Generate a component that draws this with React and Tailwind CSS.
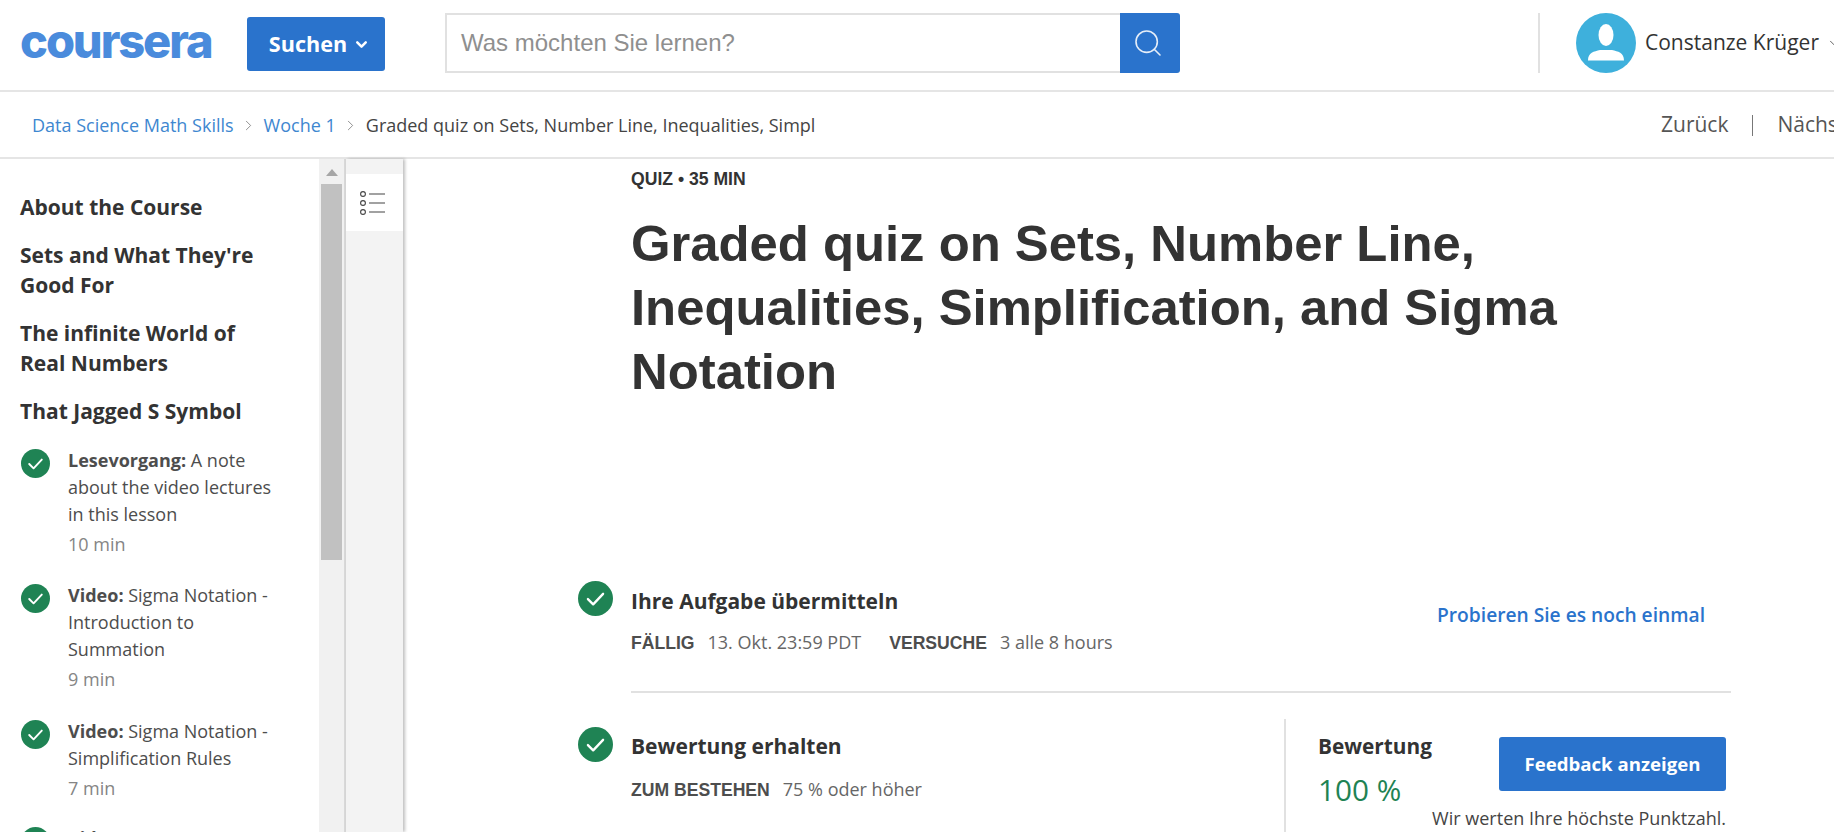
import React from 'react'
import { ChevronDown, ChevronRight, Search } from 'lucide-react'

function CheckBadge({ size }) {
  return (
    <svg width={size} height={size} viewBox="0 0 30 30" className="shrink-0">
      <circle cx="15" cy="15" r="15" fill="#1f8354" />
      <path d="M8.5 15.500l4.500 4.500 8.500-9" fill="none" stroke="#fff" strokeWidth="2" strokeLinecap="round" strokeLinejoin="round" />
    </svg>
  )
}

function Lesson({ kind, title, time, className }) {
  return (
    <div className={'flex gap-[19px] ' + className}>
      <div className="pt-[1px] pl-[1px]"><CheckBadge size={29} /></div>
      <div className="-ml-[1px] w-[210px] text-[18px] leading-[27px] text-[#4d4d4d]">
        <p className="-mt-[1px]"><span className="font-bold">{kind}:</span> {title}</p>
        {time && <p className="mt-[3px] text-[#858585]">{time}</p>}
      </div>
    </div>
  )
}

function Sidebar() {
  const headings = [
    ["About the Course"],
    ["Sets and What They're", 'Good For'],
    ['The infinite World of', 'Real Numbers'],
    ['That Jagged S Symbol'],
  ]
  return (
    <aside className="w-[319px] shrink-0 overflow-hidden pl-[20px] pt-[33px]">
      {headings.map((lines, i) => (
        <h3 key={i} className="mb-[18px] whitespace-nowrap text-[21px] font-bold leading-[30px] text-[#333]">
          {lines.map((l) => <div key={l}>{l}</div>)}
        </h3>
      ))}
      <Lesson className="mt-[22px]" kind="Lesevorgang" title="A note about the video lectures in this lesson" time="10 min" />
      <Lesson className="mt-[25px]" kind="Video" title="Sigma Notation - Introduction to Summation" time="9 min" />
      <Lesson className="mt-[26px]" kind="Video" title="Sigma Notation - Simplification Rules" time="7 min" />
      <Lesson className="mt-[24px]" kind="Video" title="Sigma Notation - Properties" />
    </aside>
  )
}

function Rail() {
  return (
    <>
      <div className="flex w-[25px] shrink-0 flex-col items-center bg-[#f1f1f1] px-[2px]">
        <div className="mt-[10px] h-0 w-0 border-x-[6px] border-b-[7px] border-x-transparent border-b-[#a6a6a6]" />
        <div className="mt-[8px] h-[376px] w-[21px] bg-[#c1c1c1]" />
      </div>
      <div className="w-[2px] shrink-0 bg-[#d8d8d8]" />
      <div className="w-[57px] shrink-0 bg-[#f3f3f3] pt-[15px] shadow-[2px_0_3px_rgba(0,0,0,0.25)]">
        <div className="flex h-[57px] items-center justify-center bg-white pr-[4px]">
          <svg width="26" height="26" viewBox="0 0 26 26" fill="none" stroke="#444" strokeWidth="1.1">
            <circle cx="3" cy="4" r="2.400" />
            <circle cx="3" cy="13" r="2.400" />
            <circle cx="3" cy="22" r="2.400" />
            <path d="M9 4h16M9 13h16M9 22h16" />
          </svg>
        </div>
      </div>
    </>
  )
}

function Meta({ label, value, className = '' }) {
  return (
    <span className={className}>
      <span className="font-['Liberation_Sans',sans-serif] text-[17.6px] font-bold text-[#4d4d4d]">{label}</span>
      <span className="ml-[13px] text-[18px] text-[#666]">{value}</span>
    </span>
  )
}

function QuizBody() {
  return (
    <main className="flex-1 pl-[175px]">
      <div className="pl-[53px] font-['Liberation_Sans',sans-serif]">
        <p className="mt-[10px] text-[17.6px] font-bold leading-[20px] text-[#333]">QUIZ • 35 MIN</p>
        <h1 className="mt-[23px] w-[940px] text-[50.8px] font-bold leading-[64px] text-[#333]">
          Graded quiz on Sets, Number Line, Inequalities, Simplification, and Sigma Notation
        </h1>
      </div>

      <section className="mt-[176px] flex gap-[18px]">
        <div className="mt-[1px]"><CheckBadge size={35} /></div>
        <div className="w-[1100px]">
          <div className="flex justify-between pb-[36px] pr-[26px]">
            <div>
              <h2 className="pt-[6px] text-[21px] font-bold leading-[30px] text-[#333]">Ihre Aufgabe übermitteln</h2>
              <div className="mt-[14px] flex leading-[24px]">
                <Meta label="FÄLLIG" value="13. Okt. 23:59 PDT" />
                <Meta className="ml-[28px]" label="VERSUCHE" value="3 alle 8 hours" />
              </div>
            </div>
            <a className="mt-[21px] text-[19.200px] font-semibold leading-[28px] text-[#2a73cc]">Probieren Sie es noch einmal</a>
          </div>
          <div className="h-[2px] bg-[#e1e1e1]" />
        </div>
      </section>

      <section className="mt-[26px] flex">
        <div className="mt-[8px] mr-[18px]"><CheckBadge size={35} /></div>
        <div className="w-[653px] pt-[12px]">
          <h2 className="text-[21px] font-bold leading-[30px] text-[#333]">Bewertung erhalten</h2>
          <div className="mt-[16px] leading-[24px]">
            <Meta label="ZUM BESTEHEN" value="75 % oder höher" />
          </div>
        </div>
        <div className="flex h-[130px] w-[442px] border-l-2 border-[#e1e1e1] pl-[32px]">
          <div className="w-[181px] pt-[12px]">
            <p className="text-[20.800px] font-bold leading-[30px] text-[#333]">Bewertung</p>
            <p className="mt-[10px] text-[29.700px] leading-[38px] text-[#1f8354]">100 %</p>
          </div>
          <div className="flex w-[227px] shrink-0 flex-col items-end pt-[18px]">
            <button className="h-[54px] w-[227px] rounded-[3px] bg-[#2a73cc] text-[18.600px] font-bold text-white">Feedback anzeigen</button>
            <p className="mt-[15px] whitespace-nowrap text-[18px] leading-[24px] text-[#444]">Wir werten Ihre höchste Punktzahl.</p>
          </div>
        </div>
      </section>
    </main>
  )
}

export default function App() {
  return (
    <div className="flex h-[832px] w-[1834px] flex-col overflow-hidden bg-white font-['Open_Sans',sans-serif]">
      <header className="flex h-[92px] shrink-0 items-start border-b-2 border-[#e5e5e5] pl-[20px]">
        <div className="w-[227px] shrink-0 pt-[14px] font-['Inter',sans-serif] text-[47px] leading-[54px] font-extrabold tracking-[-2.1px] text-[#4a8bdc]">
          coursera
        </div>
        <button className="mt-[17px] flex h-[54px] w-[138px] shrink-0 items-center justify-center gap-[6px] rounded-[3px] bg-[#2a73cc] pl-[7px] text-[21.600px] font-bold text-white">
          Suchen <ChevronDown size={17} strokeWidth={3.500} />
        </button>
        <div className="mt-[13px] ml-[60px] flex h-[60px] w-[735px] shrink-0 items-stretch">
          <div className="flex flex-1 items-center border-2 border-r-0 border-[#e1e1e1] pl-[14px] font-['Liberation_Sans',sans-serif] text-[24px] text-[#8f8f8f]">
            Was möchten Sie lernen?
          </div>
          <div className="flex w-[60px] items-center justify-center rounded-r-[3px] bg-[#2a73cc] pr-[4px]">
            <Search size={32} strokeWidth={1.200} color="#e6eef8" />
          </div>
        </div>
        <div className="mt-[13px] ml-[358px] h-[60px] w-[2px] shrink-0 bg-[#e1e1e1]" />
        <svg width="60" height="60" viewBox="0 0 60 60" className="mt-[13px] ml-[36px] shrink-0">
          <circle cx="30" cy="30" r="30" fill="#3eb0dc" />
          <ellipse cx="30" cy="22" rx="7.500" ry="11" fill="#fff" />
          <path d="M12 47.500c0-8 6-9 12-10.500h12c6 1.500 12 2.500 12 10.500z" fill="#fff" />
        </svg>
        <div className="mt-[13px] ml-[9px] flex h-[60px] shrink-0 items-center whitespace-nowrap text-[21px] text-[#333]">
          Constanze Krüger
          <ChevronDown className="ml-[8px] shrink-0" size={14} strokeWidth={1.300} />
        </div>
      </header>

      <nav className="flex h-[67px] shrink-0 items-center whitespace-nowrap border-b-2 border-[#e5e5e5] pt-[1px] text-[18px]">
        <div className="flex w-[1661px] shrink-0 items-center pl-[32px]">
          <a className="text-[#3e87d0]">Data Science Math Skills</a>
          <ChevronRight className="mx-[6.5px]" size={17} strokeWidth={1} color="#666" />
          <a className="text-[#3e87d0]">Woche 1</a>
          <ChevronRight className="mx-[6.5px]" size={17} strokeWidth={1} color="#666" />
          <span className="text-[#444]">Graded quiz on Sets, Number Line, Inequalities, Simpl</span>
        </div>
        <span className="shrink-0 text-[21px] text-[#555]">Zurück</span>
        <div className="mx-[24px] h-[21px] w-[1px] shrink-0 bg-[#777]" />
        <span className="shrink-0 text-[21px] text-[#555]">Nächste</span>
      </nav>

      <div className="flex min-h-0 flex-1">
        <Sidebar />
        <Rail />
        <QuizBody />
      </div>
    </div>
  )
}
